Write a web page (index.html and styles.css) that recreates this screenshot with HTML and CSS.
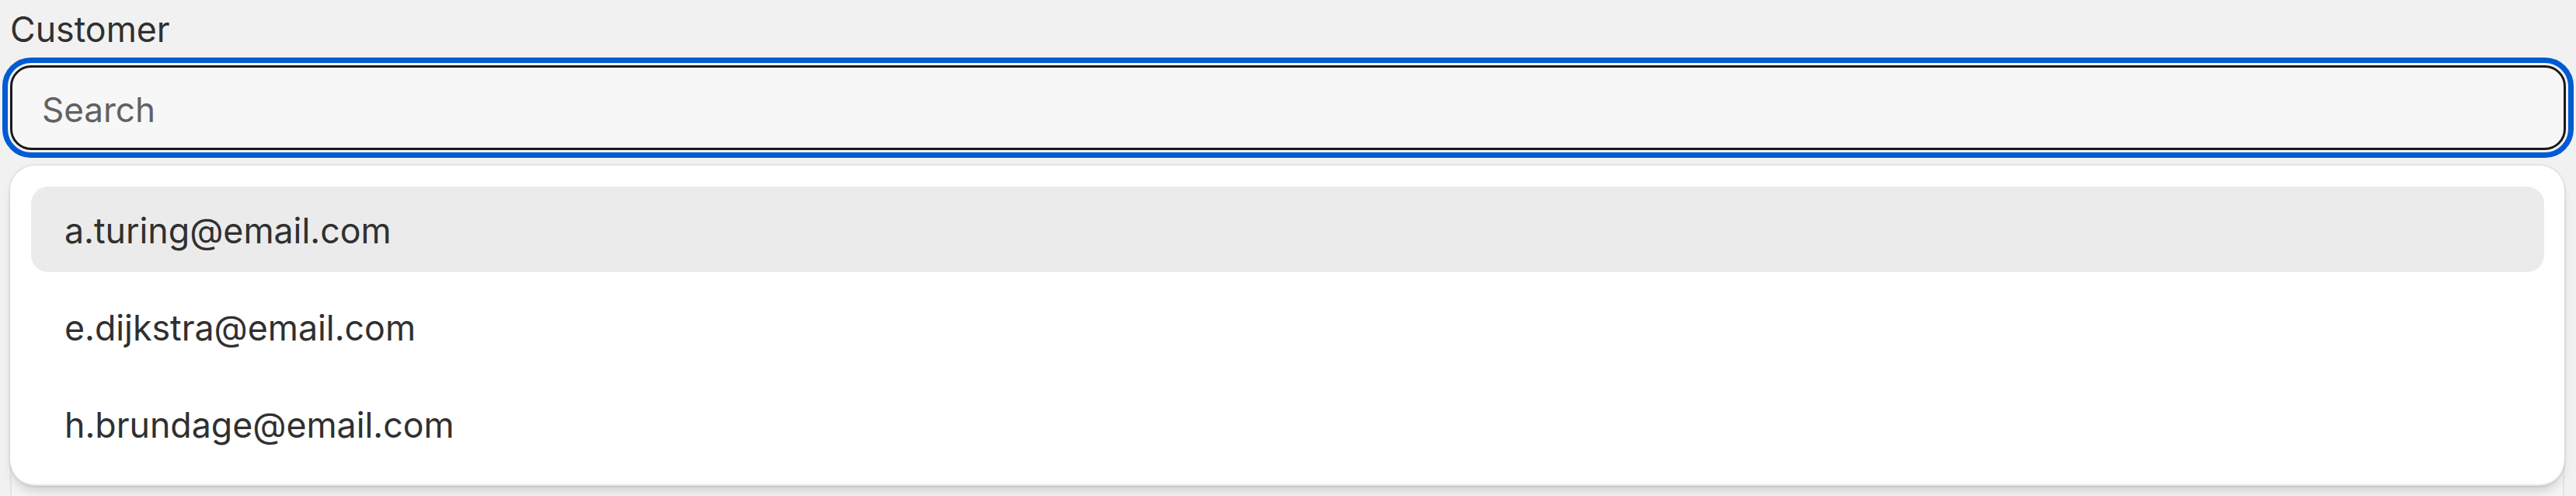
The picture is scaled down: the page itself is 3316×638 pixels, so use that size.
FILE: index.html
```html
<!DOCTYPE html>
<html lang="en">
<head>
    <meta charset="UTF-8">
    <title>Customer combobox</title>
    <link rel="stylesheet" href="styles.css">
</head>
<body>
<div class="field">
    <label class="field-label" for="customerSearch">Customer</label>
    <div class="input-wrap">
        <input type="text" id="customerSearch" class="search-input" placeholder="Search" autocomplete="off">
    </div>

    <div class="popover">
        <ul class="listbox" role="listbox">
            <li class="option is-active" role="option">a.turing@email.com</li>
            <li class="option" role="option">e.dijkstra@email.com</li>
            <li class="option" role="option">h.brundage@email.com</li>
        </ul>
    </div>
    <div class="popover-pane"></div>
</div>
</body>
</html>
```

FILE: styles.css
```css
body {
    margin: 0;
    background: #f1f1f1;
    font-family: Inter, "Noto Sans", sans-serif;
    color: #303030;
    overflow: hidden;
}

.field {
    padding: 0 13px;
}

.field-label {
    display: block;
    margin-top: 8px;
    font-size: 44.7px;
    line-height: 60px;
    color: #303030;
}

/* focused text field */
.input-wrap {
    margin-top: 16px;
    height: 109px;
    box-sizing: border-box;
    border: 3px solid #1a1a1a;
    border-radius: 27px;
    outline: 7px solid #005bd3;
    outline-offset: 3px;
    background: #f7f7f7;
    display: flex;
    align-items: center;
}

.search-input {
    flex: 1;
    border: none;
    background: transparent;
    outline: none;
    padding: 4px 0 0 38px;
    font-family: inherit;
    font-size: 44px;
    color: #303030;
}

.search-input::placeholder {
    color: #616161;
}

/* dropdown */
.popover {
    position: relative;
    z-index: 1;
    margin: 20px 2px 0 0;
    padding: 27px 26px 25px 27px;
    background: #fff;
    border-radius: 32px;
    box-shadow: 0 0 0 2px rgba(0, 0, 0, 0.05),
                0 10px 16px -6px rgba(26, 26, 26, 0.22),
                inset 0 -2px 0 rgba(0, 0, 0, 0.1);
}

.listbox {
    list-style: none;
    margin: 0;
    padding: 0;
    display: flex;
    flex-direction: column;
    gap: 15px;
}

.option {
    height: 110px;
    box-sizing: border-box;
    display: flex;
    align-items: center;
    padding: 3px 0 0 43px;
    border-radius: 22px;
    font-size: 44.7px;
    color: #303030;
}

.option.is-active {
    background: #ebebeb;
}

.popover-pane {
    margin: -60px 2px 0 0;
    height: 73px;
    border-left: 2px solid #e4e4e4;
    border-right: 2px solid #e4e4e4;
    background: #f4f4f4;
}
```
